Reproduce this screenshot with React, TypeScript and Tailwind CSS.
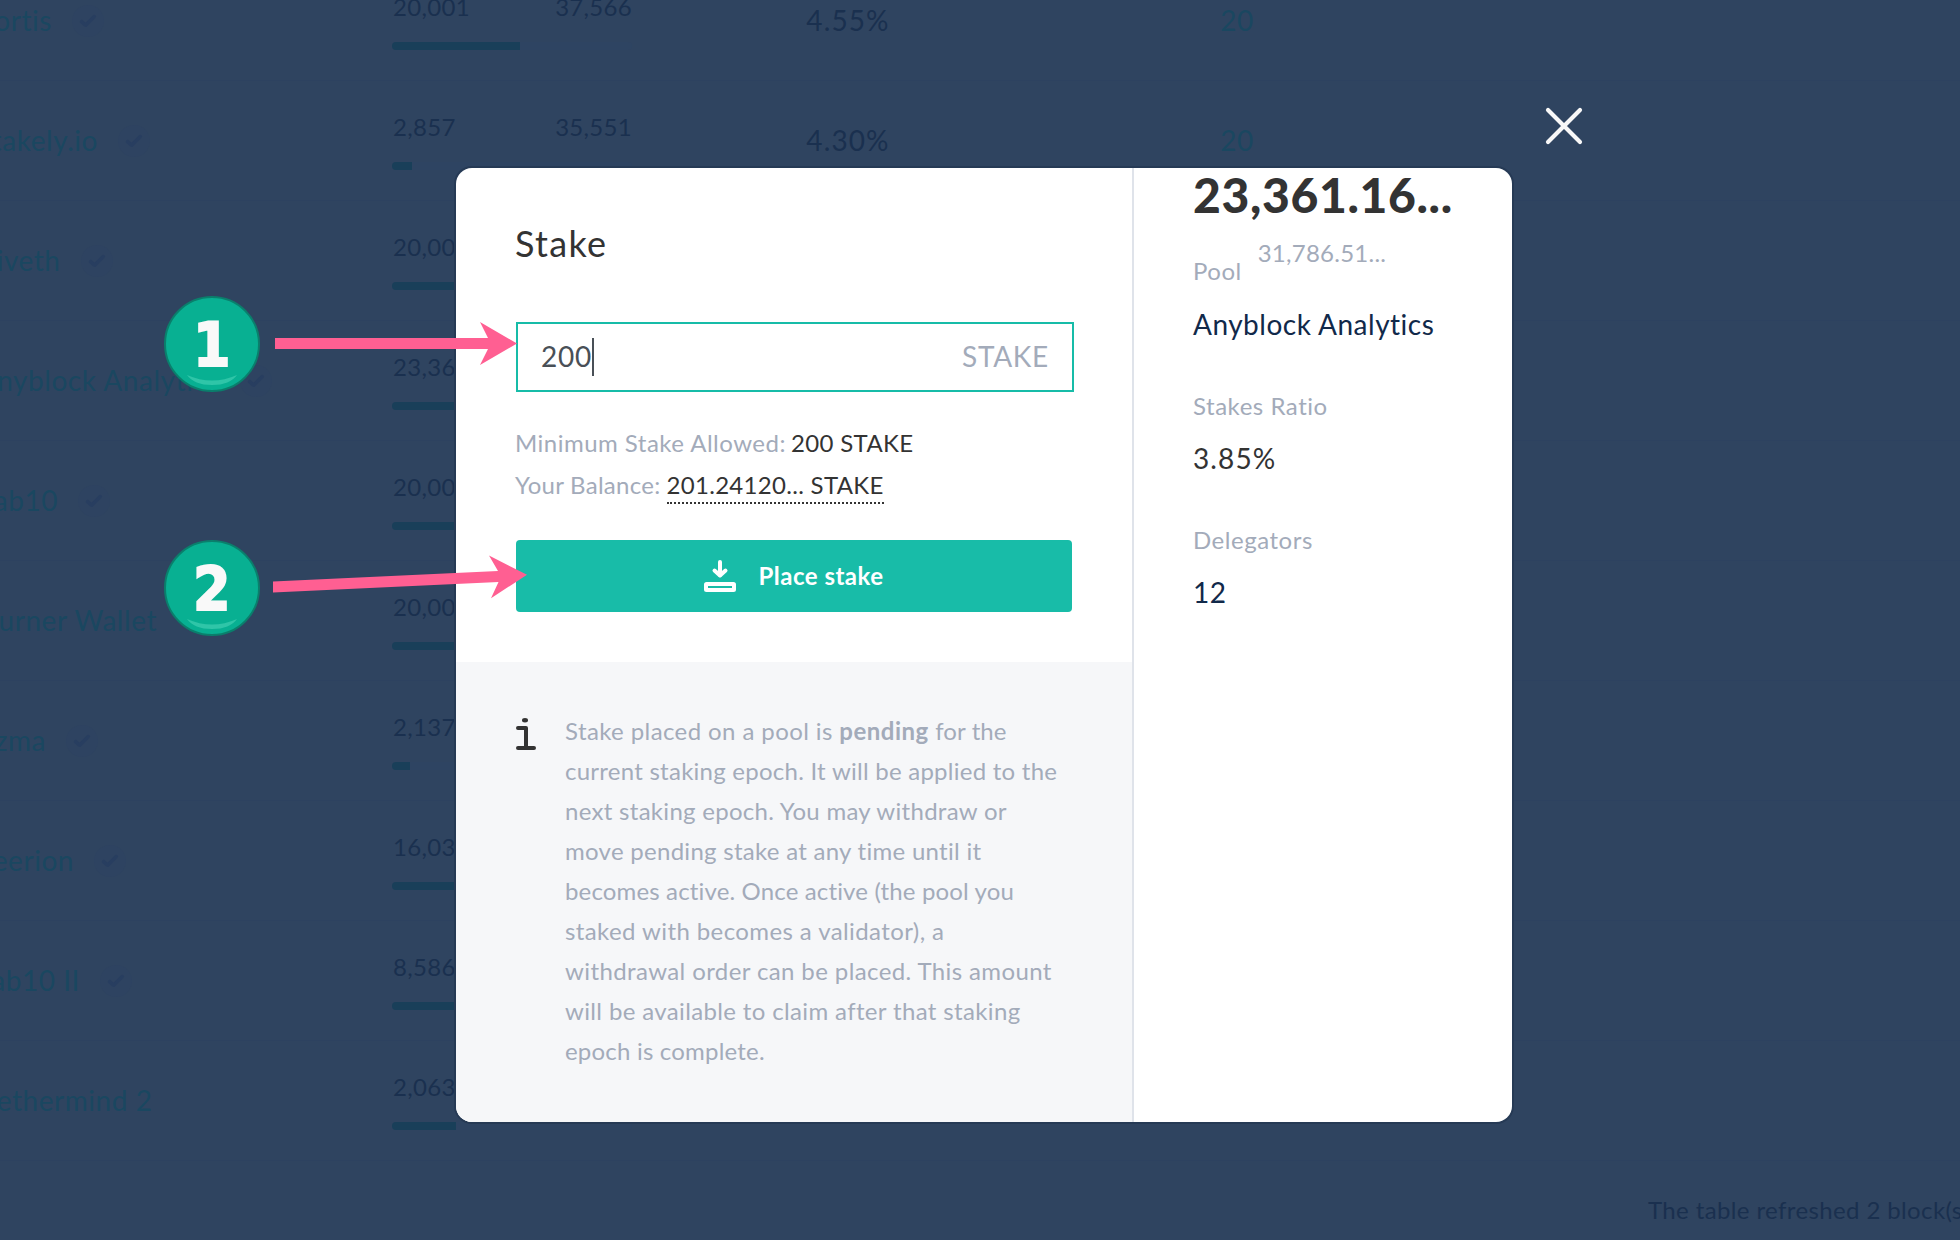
type PoolRow = {
  name: string;
  staked: string;
  total?: string;
  ratio?: string;
  likelihood?: string;
  verified: boolean;
  nameWidth: number;
  fill: number;
};

const pools: PoolRow[] = [
  { name: "ortis", staked: "20,001", total: "37,566", ratio: "4.55%", likelihood: "20", verified: true, nameWidth: 52, fill: 128 },
  { name: "takely.io", staked: "2,857", total: "35,551", ratio: "4.30%", likelihood: "20", verified: true, nameWidth: 98, fill: 20 },
  { name: "iveth", staked: "20,00", verified: true, nameWidth: 60.5, fill: 130 },
  { name: "nyblock Analytics", staked: "23,36", verified: true, nameWidth: 220, fill: 150 },
  { name: "ab10", staked: "20,00", verified: true, nameWidth: 58, fill: 130 },
  { name: "urner Wallet", staked: "20,00", verified: false, nameWidth: 157, fill: 130 },
  { name: "zma", staked: "2,137", verified: true, nameWidth: 46, fill: 18 },
  { name: "eerion", staked: "16,03", verified: true, nameWidth: 74, fill: 110 },
  { name: "ab10 II", staked: "8,586", verified: true, nameWidth: 80, fill: 90 },
  { name: "ethermind 2", staked: "2,063", verified: false, nameWidth: 152.5, fill: 64 },
];

const infoLines = [
  { text: "current staking epoch. It will be applied to the", cls: "tracking-[0.25px]" },
  { text: "next staking epoch. You may withdraw or", cls: "tracking-[0.29px]" },
  { text: "move pending stake at any time until it", cls: "tracking-[0.28px]" },
  { text: "becomes active. Once active (the pool you", cls: "tracking-[0.15px]" },
  { text: "staked with becomes a validator), a", cls: "tracking-[0.4px]" },
  { text: "withdrawal order can be placed. This amount", cls: "tracking-[0.39px]" },
  { text: "will be available to claim after that staking", cls: "tracking-[0.36px]" },
  { text: "epoch is complete.", cls: "tracking-[0.2px]" },
];

function VerifiedBadge() {
  return (
    <span className="ml-5 flex size-8 shrink-0 items-center justify-center rounded-full bg-[#2e4361]">
      <svg width="18" height="16" viewBox="0 0 18 16" fill="none" stroke="#283e60" strokeWidth="3.6" strokeLinecap="round" strokeLinejoin="round">
        <path d="M2.6 8.6 L6.6 12.2 L15.2 3.6" />
      </svg>
    </span>
  );
}

function Row({ p }: { p: PoolRow }) {
  return (
    <div className="flex h-[120px] shrink-0 border-b border-[#2d4260]">
      <div className="flex w-[392px] shrink-0 items-center">
        <div className="flex shrink-0 justify-end pb-px text-[28px] leading-[34px] tracking-[0.55px] text-[#1a4760]" style={{ width: p.nameWidth }}>
          {p.name}
        </div>
        {p.verified && <VerifiedBadge />}
      </div>
      <div className="w-[240px] shrink-0 pt-8">
        <div className="flex h-7 justify-between pl-px text-2xl leading-[28px] tracking-[0.3px] text-[#1a304f]">
          <span>{p.staked}</span>
          <span>{p.total}</span>
        </div>
        <div className="mt-[21px] h-2 overflow-hidden rounded-full bg-[#2e4462]">
          <div className="h-full bg-[#193f59]" style={{ width: p.fill }} />
        </div>
      </div>
      <div className="flex w-[432px] items-center justify-center pb-px text-[28px] tracking-[1.1px] text-[#1a304f]">{p.ratio}</div>
      <div className="flex w-[346px] items-center justify-center pb-px text-[28px] tracking-[0.4px] text-[#1a4760]">{p.likelihood}</div>
    </div>
  );
}

function StepBadge({ n, className }: { n: string; className: string }) {
  return (
    <div className={`absolute flex size-24 items-center justify-center rounded-full border-2 border-[#0a7f6c] bg-[#08b092] ${className}`}>
      <span className="scale-x-[0.9] pt-[1px] font-['DejaVu_Sans'] text-[60px] font-bold leading-none text-[#f9f9f9] [-webkit-text-stroke:2px_#f9f9f9]">{n}</span>
      <svg className="absolute bottom-[2px] left-[21px]" width="50" height="14" viewBox="0 0 50 14" fill="#2fc5a8">
        <path d="M0 1 Q25 12 50 1 Q43 11 25 11 Q7 11 0 1Z" />
      </svg>
    </div>
  );
}

function Stat({ label, value, valueClass }: { label: string; value: string; valueClass: string }) {
  return (
    <div className="mt-[50px]">
      <div className="text-2xl leading-[30px] tracking-[0.53px] text-[#a3abba]">{label}</div>
      <div className={`mt-5 text-[28px] leading-[34px] ${valueClass}`}>{value}</div>
    </div>
  );
}

export default function App() {
  return (
    <div className="relative h-[1240px] w-[1960px] overflow-hidden whitespace-nowrap bg-[#2f4460] font-[Lato,sans-serif]">
      <div className="-mt-[39px] flex flex-col">
        {pools.map((p, i) => (
          <Row key={i} p={p} />
        ))}
        <div className="ml-[1648px] mt-[34px] text-2xl leading-[30px] tracking-[0.38px] text-[#1a304f]">The table refreshed 2 block(s</div>
      </div>

      <button className="absolute left-[1542px] top-[104px] size-11" aria-label="Close">
        <svg width="44" height="44" viewBox="0 0 44 44" stroke="#f8f8f8" strokeWidth="4.2" strokeLinecap="round">
          <path d="M6 6 L38 38 M38 6 L6 38" />
        </svg>
      </button>

      <div className="absolute left-[456px] top-[168px] flex h-[954px] w-[1056px] overflow-hidden rounded-[16px] bg-white shadow-[0_0_0_2px_#263a55]">
        <div className="flex w-[676px] flex-col">
          <div className="h-[494px] pl-[59px] pt-[51px]">
            <h1 className="text-[36px] leading-[48px] tracking-[1.3px] text-[#333333]">Stake</h1>
            <div className="ml-px mt-[55px] flex h-[70px] w-[558px] items-center border-2 border-[#17bca8] px-[23px] text-[28px]">
              <span className="pb-0.5 tracking-[0.7px] text-[#495057]">200</span>
              <span className="h-[38px] w-[2px] bg-[#495057]" />
              <span className="ml-auto pb-0.5 tracking-[0.7px] text-[#a3abba]">STAKE</span>
            </div>
            <div className="mt-[30px] text-2xl leading-[42px] text-[#a3abba]">
              <div className="flex gap-[5px]">
                <span className="tracking-[0.48px]">Minimum Stake Allowed:</span>
                <span className="tracking-[0.35px] text-[#333333]">200 STAKE</span>
              </div>
              <div>
                <span className="mr-[6px] tracking-[0.28px]">Your Balance:</span>
                <span className="border-b-2 border-dotted border-[#333333] pb-[3px] tracking-[0.3px] text-[#333333]">201.24120... STAKE</span>
              </div>
            </div>
            <button className="ml-px mt-[34px] flex h-[72px] w-[556px] items-center justify-center gap-[22px] rounded-[4px] bg-[#18bca8] text-2xl font-bold tracking-[0.5px] text-white">
              <svg width="32" height="32" viewBox="0 0 32 32" fill="none" stroke="white">
                <path d="M16 2 V15" strokeWidth="4" strokeLinecap="round" />
                <path d="M10.5 10.5 L16 15.5 L21.5 10.5" strokeWidth="4" strokeLinecap="round" strokeLinejoin="round" />
                <rect x="2" y="24" width="28" height="6" rx="0.5" strokeWidth="4" />
              </svg>
              <span>Place stake</span>
            </button>
          </div>
          <div className="flex h-[460px] bg-[#f6f7f9] pl-[60px] pt-12">
            <svg className="mt-2" width="20" height="32" viewBox="0 0 20 32" fill="none" stroke="#333333" strokeWidth="4" strokeLinecap="round" strokeLinejoin="round">
              <ellipse cx="9" cy="2.2" rx="3" ry="2.2" fill="#333333" stroke="none" />
              <path d="M2 10 H10 V30 M2 30 H18" />
            </svg>
            <div className="ml-[29px] mt-px text-2xl leading-[40px] text-[#a3abba]">
              <div className="tracking-[0.4px]">
                Stake placed on a pool is <b className="tracking-[0.5px]">pending</b> <span className="tracking-[0.1px]">for the</span>
              </div>
              {infoLines.map((l) => (
                <div key={l.text} className={l.cls}>{l.text}</div>
              ))}
            </div>
          </div>
        </div>
        <div className="flex-1 border-l-2 border-[#dfe3ea] pl-[59px]">
          <div className="mt-[3px] text-[48px] font-black leading-[48px] tracking-[0.65px] text-[#333333]">23,361.16...</div>
          <div className="mt-[37px] flex text-2xl leading-[30px] text-[#a3abba]">
            <span className="tracking-[0.5px]">Pool</span>
            <span className="relative -top-[18px] ml-4 tracking-[0.25px]">31,786.51...</span>
          </div>
          <div className="mt-[21px] text-[28px] leading-[34px] tracking-[0.5px] text-[#11294a]">Anyblock Analytics</div>
          <Stat label="Stakes Ratio" value="3.85%" valueClass="tracking-[1.1px] text-[#333333]" />
          <Stat label="Delegators" value="12" valueClass="tracking-[0.5px] text-[#11294a]" />
        </div>
      </div>

      <StepBadge n="1" className="left-[164px] top-[296px]" />
      <StepBadge n="2" className="left-[164px] top-[540px]" />
      <svg className="absolute left-[270px] top-[318px]" width="260" height="52" viewBox="270 318 260 52" fill="#ff5f92">
        <path d="M275 338 H488 L480 322 L517 343.5 L480 365 L488 349 H275Z" />
      </svg>
      <svg className="absolute left-[270px] top-[550px]" width="264" height="54" viewBox="270 550 264 54" fill="#ff5f92">
        <path d="M273 581.5 L498 571 L489 555.5 L527 574.8 L491 598.2 L498.5 582 L273 592.5Z" />
      </svg>
    </div>
  );
}
